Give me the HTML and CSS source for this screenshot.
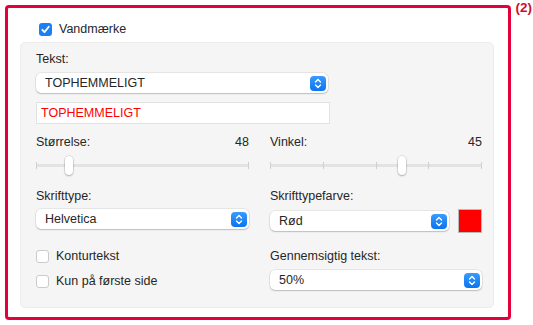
FILE: index.html
```html
<!DOCTYPE html>
<html lang="da">
<head>
	<meta charset="UTF-8">
	<title>Vandmærke</title>
	<link rel="stylesheet" href="styles.css">
</head>
<body>
	<div class="frame">
		<span class="tag">(2)</span>
		<div class="check head">
			<span class="box on">
				<svg width="13" height="13" viewBox="0 0 13 13"><path d="M3.3 6.8 L5.5 9.1 L9.8 3.8" fill="none" stroke="#fff" stroke-width="1.8" stroke-linecap="round" stroke-linejoin="round"/></svg>
			</span>
			<span>Vandmærke</span>
		</div>
		<div class="panel">
			<div class="label">Tekst:</div>
			<div class="select wide">
				<span>TOPHEMMELIGT</span>
				<span class="stepper"><svg width="16" height="15" viewBox="0 0 16 15"><path d="M5.5 6 L8 3.5 L10.5 6 M5.5 9 L8 11.5 L10.5 9" fill="none" stroke="#fff" stroke-width="1.4" stroke-linecap="round" stroke-linejoin="round"/></svg></span>
			</div>
			<div class="input">TOPHEMMELIGT</div>
			<div class="cols">
				<div class="col">
					<div class="label split"><span>Størrelse:</span><span>48</span></div>
					<div class="slider">
						<div class="track">
							<i></i><i></i>
						</div>
						<span class="thumb" style="left: 29px"></span>
					</div>
					<div class="label">Skrifttype:</div>
					<div class="select">
						<span>Helvetica</span>
						<span class="stepper"><svg width="16" height="15" viewBox="0 0 16 15"><path d="M5.5 6 L8 3.5 L10.5 6 M5.5 9 L8 11.5 L10.5 9" fill="none" stroke="#fff" stroke-width="1.4" stroke-linecap="round" stroke-linejoin="round"/></svg></span>
					</div>
					<div class="checks">
						<div class="check"><span class="box"></span><span>Konturtekst</span></div>
						<div class="check"><span class="box"></span><span>Kun på første side</span></div>
					</div>
				</div>
				<div class="col">
					<div class="label split"><span>Vinkel:</span><span>45</span></div>
					<div class="slider">
						<div class="track">
							<i></i><i></i><i></i><i></i><i></i>
						</div>
						<span class="thumb" style="left: 128px"></span>
					</div>
					<div class="label">Skrifttypefarve:</div>
					<div class="color-row">
						<div class="select">
							<span>Rød</span>
							<span class="stepper"><svg width="16" height="15" viewBox="0 0 16 15"><path d="M5.5 6 L8 3.5 L10.5 6 M5.5 9 L8 11.5 L10.5 9" fill="none" stroke="#fff" stroke-width="1.4" stroke-linecap="round" stroke-linejoin="round"/></svg></span>
						</div>
						<span class="swatch"></span>
					</div>
					<div class="label opacity">Gennemsigtig tekst:</div>
					<div class="select">
						<span>50%</span>
						<span class="stepper"><svg width="16" height="15" viewBox="0 0 16 15"><path d="M5.5 6 L8 3.5 L10.5 6 M5.5 9 L8 11.5 L10.5 9" fill="none" stroke="#fff" stroke-width="1.4" stroke-linecap="round" stroke-linejoin="round"/></svg></span>
					</div>
				</div>
			</div>
		</div>
	</div>
</body>
</html>
```

FILE: styles.css
```css
body{
	margin: 0;
	background-color: #fff;
	font-family: "Liberation Sans", Arial, sans-serif;
	font-size: 12.5px;
	color: #262626;
}
.frame{
	position: relative;
	box-sizing: border-box;
	width: 506px;
	height: 315px;
	margin: 5px 0 0 5px;
	border: 3px solid #e4003a;
	border-radius: 4px;
	padding: 14px 14px 9px 12px;
}
.tag{
	position: absolute;
	top: -8px;
	right: -24px;
	font-size: 13.5px;
	line-height: 15px;
	font-weight: bold;
	color: #c8102e;
}
.check{
	display: flex;
	align-items: center;
	gap: 7px;
	height: 14px;
}
.head{
	padding-left: 19px;
	margin-bottom: 6px;
}
.box{
	box-sizing: border-box;
	width: 13px;
	height: 13px;
	border: 1px solid #cbcbcb;
	border-radius: 3px;
	background-color: #fff;
	display: flex;
}
.box.on{
	border: none;
	background-color: #1b7ff5;
}
.panel{
	box-sizing: border-box;
	height: 266px;
	background-color: #f5f5f5;
	border: 1px solid #ececec;
	border-radius: 5px;
	padding: 9px 11px 0 15px;
}
.label{
	height: 14px;
	line-height: 14px;
}
.split{
	display: flex;
	justify-content: space-between;
}
.select{
	box-sizing: border-box;
	height: 20px;
	background-color: #fff;
	border-radius: 5px;
	box-shadow: 0 0 0 0.5px rgba(0,0,0,.12), 0 1px 1.5px rgba(0,0,0,.18);
	display: flex;
	align-items: center;
	justify-content: space-between;
	padding: 0 2px 0 9px;
	margin-top: 7px;
}
.select.wide{
	width: 292px;
}
.stepper{
	width: 16px;
	height: 15px;
	border-radius: 4px;
	background: linear-gradient(#3a9bff, #0a74f0);
	display: flex;
}
.input{
	box-sizing: border-box;
	width: 294px;
	height: 22px;
	margin-top: 9px;
	background-color: #fff;
	border: 1px solid #e2e2e2;
	color: #ff0000;
	line-height: 20px;
	padding-left: 4px;
}
.cols{
	display: grid;
	grid-template-columns: 213px 212px;
	column-gap: 21px;
	margin-top: 11px;
}
.slider{
	position: relative;
	height: 20px;
	margin-top: 7px;
	margin-bottom: 13px;
}
.track{
	position: relative;
	top: 8px;
	height: 3px;
	background-color: #e3e3e3;
	border-radius: 2px;
	display: flex;
	justify-content: space-between;
}
.track i{
	display: block;
	width: 1px;
	height: 7px;
	margin-top: -2px;
	background-color: #cfcfcf;
}
.thumb{
	position: absolute;
	top: 0;
	width: 8px;
	height: 19px;
	background-color: #fff;
	border-radius: 4px;
	box-shadow: 0 0 0 0.5px rgba(0,0,0,.15), 0 1px 2px rgba(0,0,0,.25);
}
.col > .label + .select,
.color-row{
	margin-top: 6px;
}
.color-row .select{
	margin-top: 0;
	flex: 1;
}
.checks{
	display: flex;
	flex-direction: column;
	gap: 11px;
	margin-top: 20px;
}
.color-row{
	display: flex;
	align-items: center;
	gap: 9px;
}
.swatch{
	box-sizing: border-box;
	width: 24px;
	height: 24px;
	border: 1px solid #b9b9b9;
	background-color: #ff0000;
}
.col > .opacity + .select{
	margin-top: 7px;
}
.opacity{
	margin-top: 16px;
}
```
